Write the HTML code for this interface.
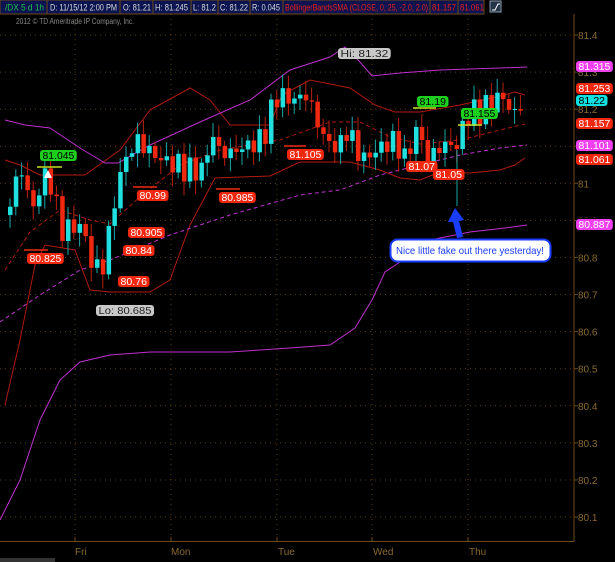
<!DOCTYPE html>
<html><head><meta charset="utf-8"><style>
html,body{margin:0;padding:0;background:#000;width:615px;height:562px;overflow:hidden}
svg{display:block;font-family:"Liberation Sans",sans-serif}
</style></head><body>
<svg id="s" width="615" height="562" xmlns="http://www.w3.org/2000/svg">
<rect width="615" height="562" fill="#000"/>
<g id="grid"></g>
<g id="lines"></g>
<g id="candles"></g>
<g id="labels"></g>
<!-- header -->
<g font-size="9.5">
<rect x="0" y="0" width="484" height="14" fill="#0b1450" stroke="#6b4a18" stroke-width="1"/>
<g stroke="#6b4a18"><line x1="47" y1="0" x2="47" y2="14"/><line x1="120" y1="0" x2="120" y2="14"/><line x1="153" y1="0" x2="153" y2="14"/><line x1="191" y1="0" x2="191" y2="14"/><line x1="218" y1="0" x2="218" y2="14"/><line x1="250" y1="0" x2="250" y2="14"/><line x1="283" y1="0" x2="283" y2="14"/><line x1="430" y1="0" x2="430" y2="14"/><line x1="458" y1="0" x2="458" y2="14"/></g>
<text x="5" y="10.5" fill="#19c24a" textLength="39" lengthAdjust="spacingAndGlyphs">/DX 5 d 1h</text>
<text x="50" y="10.5" fill="#d8d8d8" textLength="67" lengthAdjust="spacingAndGlyphs">D: 11/15/12 2:00 PM</text>
<text x="123" y="10.5" fill="#d8d8d8" textLength="28" lengthAdjust="spacingAndGlyphs">O: 81.21</text>
<text x="155" y="10.5" fill="#d8d8d8" textLength="33" lengthAdjust="spacingAndGlyphs">H: 81.245</text>
<text x="193" y="10.5" fill="#d8d8d8" textLength="23" lengthAdjust="spacingAndGlyphs">L: 81.2</text>
<text x="220" y="10.5" fill="#d8d8d8" textLength="28" lengthAdjust="spacingAndGlyphs">C: 81.22</text>
<text x="252" y="10.5" fill="#d8d8d8" textLength="28" lengthAdjust="spacingAndGlyphs">R: 0.045</text>
<text x="285" y="10.5" fill="#e8201a" textLength="143" lengthAdjust="spacingAndGlyphs">BollingerBandsSMA (CLOSE, 0, 25, -2.0, 2.0)</text>
<text x="432" y="10.5" fill="#e8201a" textLength="24" lengthAdjust="spacingAndGlyphs">81.157</text>
<text x="460" y="10.5" fill="#e8201a" textLength="24" lengthAdjust="spacingAndGlyphs">81.061</text>
<rect x="490" y="1" width="11" height="11" fill="#26344a" stroke="#8899aa"/>
<path d="M492 10 H495 L498 4 H500" stroke="#fff" fill="none"/>
<text x="16" y="24" fill="#888" font-size="8" textLength="118" lengthAdjust="spacingAndGlyphs">2012 © TD Ameritrade IP Company, Inc.</text>
</g>
<!-- axes -->
<line x1="574" y1="14" x2="574" y2="542" stroke="#6b4a18"/>
<line x1="0" y1="541.5" x2="574" y2="541.5" stroke="#6b4a18"/>
<g fill="#8a6a30" font-size="10">
<text x="75" y="555">Fri</text><text x="171" y="555">Mon</text><text x="278" y="555">Tue</text><text x="373" y="555">Wed</text><text x="469" y="555">Thu</text>
</g>
<!-- callout -->
<path d="M455 208 L448 222 L453 222 L457 238 L463 237 L459 221 L464 220 Z" fill="#1a3cff"/>
<rect x="390.5" y="239.5" width="160" height="22" rx="7" fill="#fff" stroke="#1a3cff" stroke-width="2"/>
<text x="396" y="254" font-size="10" fill="#1a3cff" textLength="148" lengthAdjust="spacingAndGlyphs">Nice little fake out there yesterday!</text>
<rect x="0" y="558" width="55" height="4" fill="#333"/>
</svg>
<script>
const S='http://www.w3.org/2000/svg';
function el(p,t,a,txt){const e=document.createElementNS(S,t);for(const k in a)e.setAttribute(k,a[k]);if(txt!=null)e.textContent=txt;document.getElementById(p).appendChild(e);return e;}
const Y=p=>35+(81.4-p)*370.8;
for(let i=0;i<14;i++){const p=81.4-i*0.1,y=Y(p);el('grid','line',{x1:0,y1:y,x2:574,y2:y,stroke:'#5a3c12','stroke-dasharray':'1,4'});
el('grid','line',{x1:574,y1:y,x2:578,y2:y,stroke:'#6b4a18'});
el('grid','text',{x:578,y:y+4,fill:'#8a6a30','font-size':10},(Math.round(p*10)/10).toString());}
[75,171,277,372,468].forEach(x=>{el('grid','line',{x1:x,y1:14,x2:x,y2:541,stroke:'#5a3c12','stroke-dasharray':'1,4'});el('grid','line',{x1:x,y1:537,x2:x,y2:541,stroke:'#6b4a18'});});
function pl(pts,c,d,w){el('lines','polyline',{points:pts.map(p=>p.join(',')).join(' '),fill:'none',stroke:c,'stroke-width':w||1,'stroke-dasharray':d||''});}
const red='#b01a10',mag='#c030d0';
pl([[5,160],[20,165],[40,175],[85,175],[120,150],[150,110],[190,88],[210,100],[230,125],[270,125],[282,95],[310,80],[350,88],[375,105],[395,112],[420,112],[460,105],[500,96],[515,92],[525,95]],red);
pl([[5,405],[20,340],[35,265],[45,245],[75,250],[90,290],[110,292],[150,292],[170,280],[190,225],[215,178],[270,176],[300,162],[350,162],[380,170],[400,178],[420,180],[440,172],[470,173],[500,170],[515,165],[525,158]],red);
pl([[5,270],[30,232],[60,210],[90,220],[110,224],[140,197],[180,165],[220,150],[280,140],[330,122],[360,122],[390,137],[420,144],[460,140],[500,130],[525,124]],red,'4,3');
pl([[5,120],[25,125],[50,128],[80,148],[105,163],[118,163],[150,145],[200,122],[250,100],[290,70],[330,57],[345,47],[360,62],[372,76],[400,73],[440,70],[500,68],[527,67]],mag);
pl([[0,322],[40,295],[80,270],[110,260],[170,235],[230,215],[300,195],[340,190],[380,175],[420,165],[460,155],[500,148],[527,145]],mag,'4,3');
pl([[0,520],[20,480],[40,420],[60,380],[80,362],[110,355],[150,352],[230,352],[290,348],[330,345],[355,328],[372,300],[385,272],[400,262],[430,240],[470,232],[505,228],[527,225]],mag);
const key=[[5,215],[18,165],[30,210],[45,170],[60,230],[80,225],[90,265],[100,270],[110,215],[120,165],[135,140],[145,150],[160,160],[175,165],[185,170],[200,170],[210,135],[220,155],[235,150],[260,140],[275,95],[290,100],[305,95],[320,135],[335,150],[345,130],[360,160],[375,150],[390,140],[405,160],[415,125],[425,160],[440,145],[455,145],[465,115],[480,110],[500,95],[510,115],[520,105]];
function interp(x){for(let i=0;i<key.length-1;i++){if(x>=key[i][0]&&x<=key[i+1][0]){const t=(x-key[i][0])/(key[i+1][0]-key[i][0]);return key[i][1]+t*(key[i+1][1]-key[i][1]);}}return key[key.length-1][1];}
let prev=interp(5);
for(let x=8;x<=524;x+=5.8){const c=interp(x)+Math.sin(x*1.7)*9+Math.sin(x*0.53)*5;const o=prev;prev=c;
const top=Math.min(o,c),bot=Math.max(o,c);const up=c<o;const col=up?'#20e0e0':'#f02810';
const hi=top-4-Math.abs(Math.sin(x*2.3))*10,lo=bot+4+Math.abs(Math.cos(x*1.9))*10;
el('candles','line',{x1:x+2,y1:hi,x2:x+2,y2:lo,stroke:up?'#1aa8a8':'#b82010'});
el('candles','rect',{x:x,y:top,width:4.5,height:Math.max(1,bot-top),fill:col});}
el('candles','line',{x1:457,y1:150,x2:457,y2:206,stroke:'#1aa8a8'});
function lab(x,y,t,bg,fg,w){w=w||t.length*5.3+5;el('labels','rect',{x:x,y:y,width:w,height:11,rx:3,fill:bg});el('labels','text',{x:x+2.5,y:y+9,'font-size':10,fill:fg||'#fff',textLength:w-5,lengthAdjust:'spacingAndGlyphs'},t);}
[[40,150,'81.045','#1ed01e','#000'],[417,96,'81.19','#1ed01e','#000'],[461,108,'81.155','#1ed01e','#000']].forEach(a=>lab(...a));
[[27,253,'80.825'],[137,190,'80.99'],[219,192,'80.985'],[128,227,'80.905'],[123,245,'80.84'],[118,276,'80.76'],[287,149,'81.105'],[406,161,'81.07'],[433,169,'81.05']].forEach(a=>lab(a[0],a[1],a[2],'#f02810','#fff'));
lab(338,48,'Hi: 81.32','#c8c8c8','#222');lab(96,305,'Lo: 80.685','#c8c8c8','#222');
[[576,61,'81.315','#f040f0'],[576,83,'81.253','#f02810'],[576,95,'81.22','#10e0e0','#000'],[576,118,'81.157','#f02810'],[576,140,'81.101','#f040f0'],[576,154,'81.061','#f02810'],[576,219,'80.887','#f040f0']].forEach(a=>{el('labels','rect',{x:576,y:a[1]-1,width:34,height:12,fill:'#000'});lab(a[0],a[1],a[2],a[3],a[4]||'#fff',a[2].length*5.3+5);});
[[24,250,48,'#f02810'],[133,187,157,'#f02810'],[216,189,240,'#f02810'],[284,146,306,'#f02810'],[37,167,62,'#c8e020'],[413,108,436,'#c8e020'],[458,125,482,'#c8e020']].forEach(a=>el('labels','line',{x1:a[0],y1:a[1],x2:a[2],y2:a[1],stroke:a[3],'stroke-width':1.5}));
el('labels','path',{d:'M44 178 L48 170 L52 178 Z',fill:'#fff'});
</script>
</body></html>
